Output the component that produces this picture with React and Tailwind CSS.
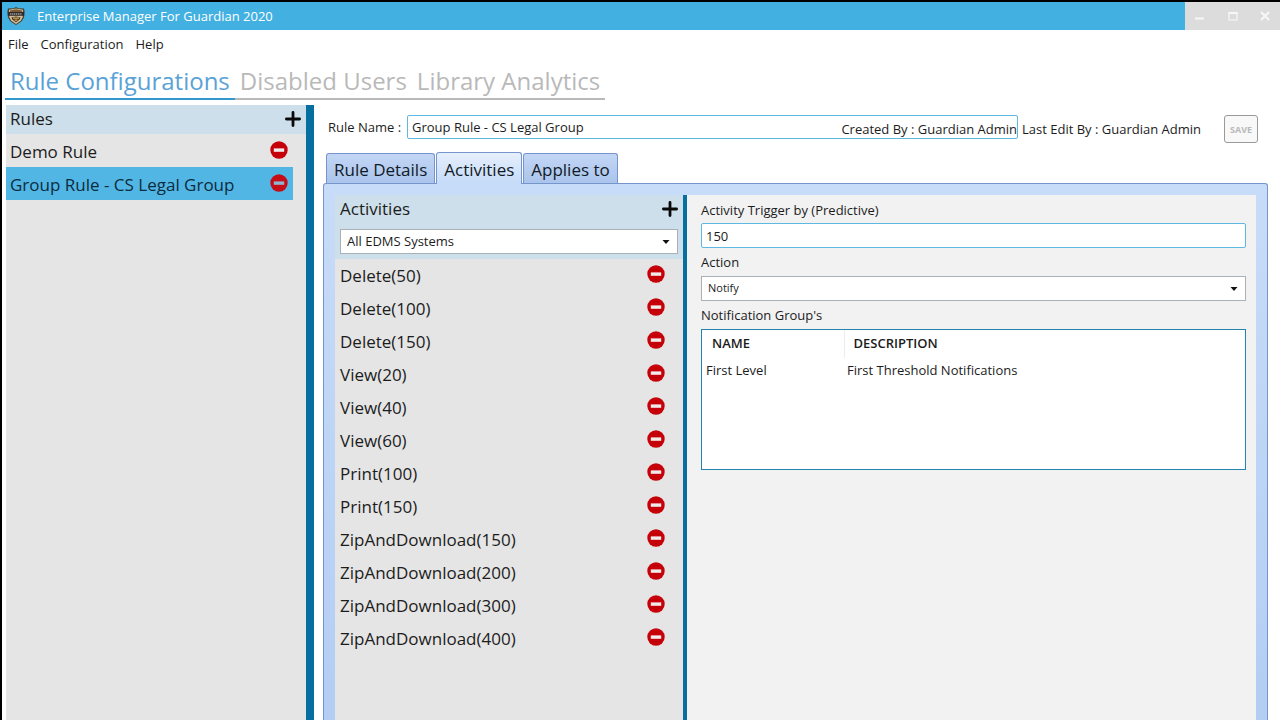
import React, { useState } from "react";

const rules = ["Demo Rule", "Group Rule - CS Legal Group"];

const activities = [
  "Delete(50)",
  "Delete(100)",
  "Delete(150)",
  "View(20)",
  "View(40)",
  "View(60)",
  "Print(100)",
  "Print(150)",
  "ZipAndDownload(150)",
  "ZipAndDownload(200)",
  "ZipAndDownload(300)",
  "ZipAndDownload(400)",
];

function ShieldLogo() {
  return (
    <svg viewBox="0 0 20 20" className="size-5" aria-hidden="true">
      <path d="M10 1 12.5 2.2 18 2.6 18.6 5 18 11.5 15.5 15.5 10 19 4.5 15.5 2 11.5 1.4 5 2 2.6 7.5 2.2Z" fill="#4a3f31" />
      <path d="M10 2.4 17 3.8 16.8 11 14.8 14.8 10 18 5.2 14.8 3.2 11 3 3.8Z" fill="#d3bd95" />
      <path d="M10 3.2 16 4.4 15.9 6.6 4.1 6.6 4 4.4Z" fill="#7b5a35" />
      <path d="M1.8 6h16.4v3.8H1.8z" fill="#2d2b2b" />
      <path d="M4 8h12" stroke="#d8d0c4" strokeWidth="1.2" strokeDasharray="1.4 .6" />
      <path d="M5.4 11.4 10 10.4 14.6 11.4 13.4 13.8 10 16.2 6.6 13.8Z" fill="#3a3430" />
      <path d="M7 12.2h6M8.5 14.2h3" stroke="#e0a94a" strokeWidth="1.2" />
    </svg>
  );
}

function PlusButton({ label }) {
  return (
    <button type="button" aria-label={label} className="flex">
      <svg viewBox="0 0 16 16" className="size-4" aria-hidden="true">
        <path d="M8 1.4v13.2M1.4 8h13.2" stroke="#0a0a0a" strokeWidth="2.8" strokeLinecap="round" />
      </svg>
    </button>
  );
}

function RemoveButton({ label, selected }) {
  return (
    <button type="button" aria-label={label} className="flex">
      <svg viewBox="0 0 18 18" className="size-[18px]" aria-hidden="true">
        <circle cx="9" cy="9" r="8.7" fill={selected ? "#c40d17" : "#c60009"} />
        <rect x="3.8" y="7.4" width="10.4" height="3.4" fill={selected ? "#8fb4cf" : "#f1ecec"} />
      </svg>
    </button>
  );
}

function DropDown({ id, label, options, className }) {
  return (
    <div className="relative">
      <select
        id={id}
        aria-label={label}
        className={"block w-full appearance-none border border-[#a9b0b6] bg-white px-[6px] text-[#1c1c1c] " + className}
      >
        {options.map((o) => (
          <option key={o}>{o}</option>
        ))}
      </select>
      <svg viewBox="0 0 8 4" className="pointer-events-none absolute top-1/2 right-2 h-1 w-2 -translate-y-1/2" aria-hidden="true">
        <path d="M.5 0h7L4 4z" fill="#111" />
      </svg>
    </div>
  );
}

function TopTab({ children, active }) {
  return (
    <button
      type="button"
      role="tab"
      aria-selected={active}
      className={
        "h-[42px] border-b-2 px-[5px] pt-[5px] text-2xl whitespace-nowrap " +
        (active ? "border-[#3498cf] text-[#5aa2d6]" : "border-[#b9b9b9] text-[#b9b9b9]")
      }
    >
      {children}
    </button>
  );
}

function PanelTab({ children, active }) {
  return (
    <button
      type="button"
      role="tab"
      aria-selected={active}
      className={
        "rounded-t-[3px] border border-b-0 border-[#7595cc] px-[7px] pt-[2px] text-[17px] whitespace-nowrap text-[#111a26] " +
        (active
          ? "relative z-10 -mb-px h-8 bg-linear-to-b from-[#e6effc] to-[#c5dbf8]"
          : "h-[30px] bg-linear-to-b from-[#c3d6f5] to-[#aac4ec]")
      }
    >
      {children}
    </button>
  );
}

export default function App() {
  const [ruleName, setRuleName] = useState("Group Rule - CS Legal Group");
  const [trigger, setTrigger] = useState("150");

  return (
    <div className="flex min-h-screen flex-col border-t-2 border-l-2 border-black bg-white font-['Open_Sans','Noto_Sans',sans-serif] text-[13px] text-[#1c1c1c]">
      <header className="flex h-7 items-stretch bg-[#42b0e1]">
        <div className="flex flex-1 items-center gap-[11px] pl-1 text-white">
          <ShieldLogo />
          <h1 className="pt-[2px]">Enterprise Manager For Guardian 2020</h1>
        </div>
        <div className="flex w-[95px] items-center justify-between bg-[#dcdcdc] px-[10px] text-[#f7f7f7]">
          <button type="button" aria-label="Minimize">
            <svg viewBox="0 0 10 10" className="size-[10px]"><path d="M0 7.5h9" stroke="currentColor" strokeWidth="2" /></svg>
          </button>
          <button type="button" aria-label="Maximize">
            <svg viewBox="0 0 10 10" className="size-[10px]"><path d="M1 2h8v7H1z" fill="none" stroke="currentColor" strokeWidth="1.2" /><path d="M.4 2h9.2" stroke="currentColor" strokeWidth="2" /></svg>
          </button>
          <button type="button" aria-label="Close">
            <svg viewBox="0 0 10 10" className="size-[10px]"><path d="m1 1 8 8M9 1 1 9" stroke="currentColor" strokeWidth="2" /></svg>
          </button>
        </div>
      </header>

      <nav className="flex h-7 items-center gap-3 px-[6px] pt-[2px]">
        <button type="button">File</button>
        <button type="button">Configuration</button>
        <button type="button">Help</button>
      </nav>

      <div role="tablist" aria-label="Sections" className="flex pl-[3px]">
        <TopTab active>Rule Configurations</TopTab>
        <TopTab>Disabled Users</TopTab>
        <TopTab>Library Analytics</TopTab>
      </div>

      <div className="mt-[5px] flex flex-1">
        <aside className="ml-1 w-[300px] shrink-0 bg-[#e5e5e5] text-[17px]">
          <div className="flex h-[29px] items-center justify-between bg-[#cddfea] pr-[5px] pb-[2px] pl-1">
            <h2>Rules</h2>
            <PlusButton label="Add rule" />
          </div>
          <ul className="mr-[13px]">
            {rules.map((rule, i) => (
              <li
                key={rule}
                className={"flex h-[33px] items-center justify-between pr-[5px] pl-1 " + (i === 1 ? "bg-[#52b6e5] text-[#0c2c3e]" : "")}
              >
                <span className="pt-[2px]">{rule}</span>
                <div className="pb-[2px]"><RemoveButton label={"Remove " + rule} selected={i === 1} /></div>
              </li>
            ))}
          </ul>
        </aside>
        <div className="w-2 shrink-0 bg-[#076f9f]" />

        <main className="flex min-w-0 flex-1 flex-col pt-[10px] pr-3 pl-[9px]">
          <div className="flex items-start pr-[10px] pl-[5px]">
            <label htmlFor="rule-name" className="w-[79px] shrink-0 leading-6 whitespace-nowrap">Rule Name :</label>
            <div className="relative flex-1">
              <input
                id="rule-name"
                value={ruleName}
                onChange={(e) => setRuleName(e.target.value)}
                className="block h-6 w-full rounded-[2px] border border-[#5fb8e0] bg-white px-1"
              />
              <span className="pointer-events-none absolute top-[2px] right-px leading-6">Created By : Guardian Admin</span>
            </div>
            <span className="mt-[2px] w-[206px] shrink-0 pl-1 leading-6">Last Edit By : Guardian Admin</span>
            <button type="button" disabled className="h-7 w-[34px] shrink-0 rounded-[3px] border border-[#9a9a9a] bg-[#f8f8f8] pt-[2px] text-[9px] font-bold text-[#b9b9b9]">
              SAVE
            </button>
          </div>

          <div role="tablist" aria-label="Rule sections" className="mt-[9px] flex items-end gap-px pl-[3px]">
            <PanelTab>Rule Details</PanelTab>
            <PanelTab active>Activities</PanelTab>
            <PanelTab>Applies to</PanelTab>
          </div>

          <div className="flex flex-1 rounded-t-[3px] border border-b-0 border-[#7595cc] bg-linear-to-b from-[#c7dcf8] to-[#b3cdf3] px-[11px] pt-[11px]">
            <section className="w-[348px] shrink-0 bg-[#e5e5e5] text-[17px]">
              <div className="bg-[#cddfea] px-[5px] pb-[5px]">
                <div className="flex h-[34px] items-center justify-between pb-[6px]">
                  <h2>Activities</h2>
                  <PlusButton label="Add activity" />
                </div>
                <DropDown id="system" label="EDMS system" options={["All EDMS Systems"]} className="h-[25px] text-[13px]" />
              </div>
              <ul>
                {activities.map((a) => (
                  <li key={a} className="flex h-[33px] items-center justify-between pr-[18px] pl-[5px]">
                    <span>{a}</span>
                    <div className="pb-1"><RemoveButton label={"Remove " + a} /></div>
                  </li>
                ))}
              </ul>
            </section>
            <div className="w-1 shrink-0 bg-[#076f9f]" />
            <section className="min-w-0 flex-1 bg-[#f2f2f2] pr-[10px] pl-[14px]">
              <label htmlFor="trigger" className="block pt-[2px] leading-[26px]">Activity Trigger by (Predictive)</label>
              <input
                id="trigger"
                value={trigger}
                onChange={(e) => setTrigger(e.target.value)}
                className="block h-[25px] w-full rounded-[2px] border border-[#5fb8e0] bg-white px-1"
              />
              <label htmlFor="action" className="block leading-7">Action</label>
              <DropDown id="action" label="Action" options={["Notify"]} className="h-[25px] text-[11px]" />
              <h3 className="leading-7">Notification Group's</h3>
              <div className="h-[141px] border border-[#2484ad] bg-white">
                <table className="w-full table-fixed text-left">
                  <thead>
                    <tr className="h-7">
                      <th className="w-[142px] border-r border-[#ececec] pl-[10px] font-semibold">NAME</th>
                      <th className="pl-[9px] font-semibold">DESCRIPTION</th>
                    </tr>
                  </thead>
                  <tbody>
                    <tr className="h-[26px]">
                      <td className="pl-1">First Level</td>
                      <td className="pl-[3px]">First Threshold Notifications</td>
                    </tr>
                  </tbody>
                </table>
              </div>
            </section>
          </div>
        </main>
      </div>
    </div>
  );
}
